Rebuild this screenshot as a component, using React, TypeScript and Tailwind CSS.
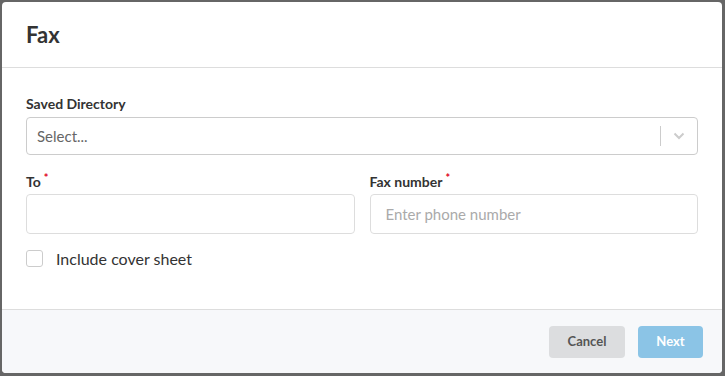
import React from "react";

export default function App() {
  return (
    <div
      className="w-[725px] h-[376px] bg-[#666666] pt-[2px] pl-[2px] overflow-hidden"
      style={{ fontFamily: "Lato, 'Noto Sans', sans-serif" }}
    >
      <div className="w-[720px] h-[371px] bg-white rounded-[4px] flex flex-col overflow-hidden">
        <div className="h-[66px] shrink-0 border-b border-[#dddddd] flex items-center px-[24px]">
          <h1 className="text-[22px] font-bold text-[#333333] leading-none">Fax</h1>
        </div>
        <div className="flex-1 px-[24px] pt-[27px]">
          <label className="block text-[14px] font-bold text-[#333333] leading-[17px]">Saved Directory</label>
          <div className="mt-[5px] h-[38px] border border-[#cccccc] rounded-[4px] flex items-center">
            <span className="flex-1 pl-[10px] text-[15px] text-[#666666]">Select...</span>
            <span className="w-px h-[20px] bg-[#cccccc]"></span>
            <span className="w-[36px] flex justify-center">
              <svg width="12" height="8" viewBox="0 0 12 8" fill="none">
                <path d="M1.5 1.5 L6 6 L10.5 1.5" stroke="#cccccc" strokeWidth="2" />
              </svg>
            </span>
          </div>
          <div className="mt-[18px] grid grid-cols-2 gap-x-[15px]">
            <div>
              <label className="block text-[14px] font-bold text-[#333333] leading-[17px]">
                To<sup className="text-[#e0001b] ml-[3px] text-[11px]">*</sup>
              </label>
              <div className="mt-[4px] h-[40px] border border-[#dddddd] rounded-[4px]"></div>
            </div>
            <div>
              <label className="block text-[14px] font-bold text-[#333333] leading-[17px]">
                Fax number<sup className="text-[#e0001b] ml-[3px] text-[11px]">*</sup>
              </label>
              <div className="mt-[4px] h-[40px] border border-[#dddddd] rounded-[4px] flex items-center pl-[15px] text-[15px] text-[#aaaaaa]">
                Enter phone number
              </div>
            </div>
          </div>
          <div className="mt-[16px] flex items-center h-[17px]">
            <span className="w-[17px] h-[17px] border border-[#cccccc] rounded-[3px]"></span>
            <span className="ml-[13px] text-[16px] leading-[17px] text-[#333333]">Include cover sheet</span>
          </div>
        </div>
        <div className="h-[64px] shrink-0 bg-[#f7f8fa] border-t border-[#dddddd] flex items-center justify-end gap-[13px] pr-[19px]">
          <button className="w-[76px] h-[32px] rounded-[4px] bg-[#dcdddf] text-[13px] font-bold text-[#555555]">Cancel</button>
          <button className="w-[65px] h-[32px] rounded-[4px] bg-[#8bc4e6] text-[13px] font-bold text-white">Next</button>
        </div>
      </div>
    </div>
  );
}
